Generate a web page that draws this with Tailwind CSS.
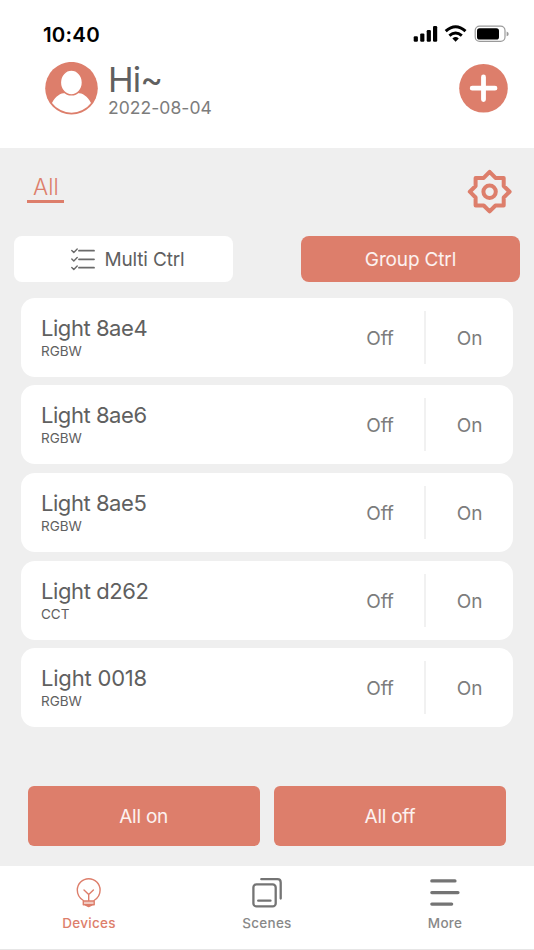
<!DOCTYPE html>
<html lang="en">
<head>
<meta charset="utf-8">
<title>Devices</title>
<script src="https://cdn.jsdelivr.net/npm/@tailwindcss/browser@4"></script>
</head>
<body class="w-[534px] h-[950px] overflow-hidden bg-white font-['Inter','Liberation_Sans',sans-serif] font-normal text-[#606060] flex flex-col">
  <header class="h-[148px] shrink-0 bg-white">
    <div class="flex justify-between items-center h-6 mt-[22px] pl-[43px] pr-[25px] text-black">
      <span class="text-[20.500px] leading-6 font-semibold tracking-[0.2px] pt-px">10:40</span>
      <svg class="w-[96px] h-6" viewBox="413 22 96 24">
        <g>
          <rect x="413.7" y="36.2" width="4.2" height="5.6" rx="1.2"/>
          <rect x="420.2" y="33.4" width="4.2" height="8.4" rx="1.2"/>
          <rect x="426.7" y="30" width="4.2" height="11.8" rx="1.2"/>
          <rect x="433" y="26" width="4.2" height="15.8" rx="1.2"/>
        </g>
        <g fill="none" stroke="#000" stroke-width="3">
          <path d="M445.700 31.200Q455.600 22.400 465.500 31.200"/>
          <path d="M449.400 35.600Q455.600 30.400 461.800 35.600"/>
        </g>
        <path d="M452.400 38.400Q455.600 35.800 458.800 38.400L455.600 41.800Z"/>
        <rect x="475.200" y="26.200" width="29.800" height="15.200" rx="4.400" fill="none" stroke="#9a9a9a" stroke-width="1.200"/>
        <rect x="477" y="28.200" width="22" height="11.400" rx="2.600"/>
        <path d="M506.600 31.600Q508.700 32.200 508.700 33.900T506.600 36.200Z" fill="#9a9a9a"/>
      </svg>
    </div>
    <div class="flex items-center pl-[45px] pr-[26px] mt-4 h-[53px]">
      <svg class="w-[53px] h-[53px]" viewBox="0 0 53 53">
        <circle cx="26.500" cy="26.200" r="26.300" fill="#dd7e6b"/>
        <path d="M7 41C10.500 34 15.500 31 20.500 31Q26.500 34.800 32.500 31C37.500 31 42.500 34 46 41A24.500 24.500 0 0 1 7 41Z" fill="#fff"/>
        <ellipse cx="26.400" cy="20.500" rx="11" ry="12.400" fill="#fff" stroke="#dd7e6b" stroke-width="1.400"/>
      </svg>
      <div class="ml-[10px] flex-1 pt-[3px]">
        <div class="text-[34.500px] leading-[34px] tracking-[-0.900px] pb-px">Hi~</div>
        <div class="text-[17.500px] leading-[20px] tracking-[0.050px] text-[#7c7c7c]">2022-08-04</div>
      </div>
      <svg class="w-[49px] h-[49px]" viewBox="0 0 49 49">
        <circle cx="24.500" cy="24.300" r="24.300" fill="#dd7e6b"/>
        <path d="M24.500 13V35.500M13.200 24.200H36" stroke="#fff" stroke-width="4.800" stroke-linecap="round"/>
      </svg>
    </div>
  </header>

  <main class="h-[718px] shrink-0 bg-[#efefef]">
    <div class="flex justify-between pl-[27.400px] pr-[22px] pt-[21px] h-[88px]">
      <div class="h-[34px] w-[37px] border-b-[3px] border-[#dd7e6b] text-center text-[22.500px] leading-9 font-light text-[#dd7e6b]">All</div>
      <svg class="w-[45px] h-[45px]" viewBox="467 169 45 45" fill="none" stroke="#dd7e6b" stroke-width="4" stroke-linejoin="round">
        <path d="M489.600 171.800L495.500 177.900H503.700V186L509.600 191.700L503.700 197.500V205.500H495.500L489.600 211.400L483.700 205.500H475.600V197.500L469.800 191.700L475.600 186V177.900H483.700Z"/>
        <circle cx="489.600" cy="191.700" r="6.200"/>
      </svg>
    </div>
    <div class="flex justify-between px-[14px] text-[19px] tracking-[-0.150px]">
      <div class="flex items-center justify-center w-[219px] h-[46px] rounded-lg bg-white pl-[9px]">
        <svg class="w-6 h-6 mr-[9px]" viewBox="0 0 24 24" fill="none" stroke="#6a6a6a" stroke-linecap="round" stroke-linejoin="round">
          <path stroke-width="1.800" d="M8 3.700H23M8 12.300H23M8 20.700H23"/>
          <path stroke-width="1.400" d="M.8 3.500L2.800 5.500L6.200 2M.8 12.100L2.800 14.100L6.200 10.600M.8 20.500L2.800 22.500L6.200 19"/>
        </svg>
        <span class="whitespace-nowrap pt-0.5">Multi Ctrl</span>
      </div>
      <div class="flex items-center justify-center w-[219px] h-[46px] rounded-lg bg-[#dd7e6b] text-white/90 pt-0.5">Group Ctrl</div>
    </div>

    <div class="flex flex-col gap-[8.500px] mt-[15.500px] px-[21px]">
      <div class="flex items-center h-[79.200px] rounded-[14px] bg-white pl-5">
        <div class="flex-1 pb-px"><div class="text-[22px] leading-7 tracking-[-0.450px]">Light 8ae4</div><div class="text-[13.500px] leading-[18px]">RGBW</div></div>
        <div class="w-[88px] h-[53px] leading-[55px] text-center text-[19px] tracking-[-0.150px] text-[#7c7c7c]">Off</div>
        <div class="w-[89px] h-[53px] leading-[55px] border-l-2 border-[#f1f1f1] text-center text-[19px] tracking-[-0.150px] text-[#7c7c7c]">On</div>
      </div>
      <div class="flex items-center h-[79.200px] rounded-[14px] bg-white pl-5">
        <div class="flex-1 pb-px"><div class="text-[22px] leading-7 tracking-[-0.450px]">Light 8ae6</div><div class="text-[13.500px] leading-[18px]">RGBW</div></div>
        <div class="w-[88px] h-[53px] leading-[55px] text-center text-[19px] tracking-[-0.150px] text-[#7c7c7c]">Off</div>
        <div class="w-[89px] h-[53px] leading-[55px] border-l-2 border-[#f1f1f1] text-center text-[19px] tracking-[-0.150px] text-[#7c7c7c]">On</div>
      </div>
      <div class="flex items-center h-[79.200px] rounded-[14px] bg-white pl-5">
        <div class="flex-1 pb-px"><div class="text-[22px] leading-7 tracking-[-0.450px]">Light 8ae5</div><div class="text-[13.500px] leading-[18px]">RGBW</div></div>
        <div class="w-[88px] h-[53px] leading-[55px] text-center text-[19px] tracking-[-0.150px] text-[#7c7c7c]">Off</div>
        <div class="w-[89px] h-[53px] leading-[55px] border-l-2 border-[#f1f1f1] text-center text-[19px] tracking-[-0.150px] text-[#7c7c7c]">On</div>
      </div>
      <div class="flex items-center h-[79.200px] rounded-[14px] bg-white pl-5">
        <div class="flex-1 pb-px"><div class="text-[22px] leading-7 tracking-[-0.400px]">Light d262</div><div class="text-[13.500px] leading-[18px]">CCT</div></div>
        <div class="w-[88px] h-[53px] leading-[55px] text-center text-[19px] tracking-[-0.150px] text-[#7c7c7c]">Off</div>
        <div class="w-[89px] h-[53px] leading-[55px] border-l-2 border-[#f1f1f1] text-center text-[19px] tracking-[-0.150px] text-[#7c7c7c]">On</div>
      </div>
      <div class="flex items-center h-[79.200px] rounded-[14px] bg-white pl-5">
        <div class="flex-1 pb-px"><div class="text-[22px] leading-7 tracking-[-0.200px]">Light 0018</div><div class="text-[13.500px] leading-[18px]">RGBW</div></div>
        <div class="w-[88px] h-[53px] leading-[55px] text-center text-[19px] tracking-[-0.150px] text-[#7c7c7c]">Off</div>
        <div class="w-[89px] h-[53px] leading-[55px] border-l-2 border-[#f1f1f1] text-center text-[19px] tracking-[-0.150px] text-[#7c7c7c]">On</div>
      </div>
    </div>

    <div class="flex gap-[14px] mt-[58.300px] pl-[27.500px] pr-[28px] text-[19px] tracking-[-0.250px] text-white/90">
      <div class="flex items-center justify-center flex-1 h-[60px] rounded-md bg-[#dd7e6b] pt-[3px]">All on</div>
      <div class="flex items-center justify-center flex-1 h-[60px] rounded-md bg-[#dd7e6b] pt-[3px]">All off</div>
    </div>
  </main>

  <nav class="grid grid-cols-3 h-[84px] shrink-0 border-b border-[#e6e6e6] bg-white pt-[9px] text-[13.500px] leading-5 font-medium tracking-[0.250px] text-[#888]">
    <div class="flex flex-col items-center text-[#dd7e6b]">
      <svg class="w-9 h-9 mb-[2px]" viewBox="71 875 36 36" fill="none" stroke="#dd7e6b" stroke-width="1.400" stroke-linecap="round" stroke-linejoin="round">
        <path d="M83.400 900.500C79.500 898.300 77.300 894.500 77.300 890.100A11.400 11.400 0 0 1 100.100 890.100C100.100 894.500 97.900 898.300 94 900.500"/>
        <path d="M84 890L88.700 894.500L93.400 890M88.700 894.500V901"/>
        <path d="M83.300 901H94.200V904.700H83.300Z" fill="#f1c9c0"/>
        <path d="M85.700 905.200H91.700L88.700 906.600Z" fill="#dd7e6b"/>
      </svg>
      <span>Devices</span>
    </div>
    <div class="flex flex-col items-center">
      <svg class="w-9 h-9 mb-[2px]" viewBox="249 875 36 36" fill="none" stroke="#747474" stroke-width="2.300" stroke-linecap="round">
        <rect x="253.400" y="884.400" width="22.300" height="22" rx="3"/>
        <path d="M258.200 900.700H270.500M261.300 879.200H277.500Q280.700 879.200 280.700 882.400V898.500"/>
      </svg>
      <span>Scenes</span>
    </div>
    <div class="flex flex-col items-center">
      <svg class="w-9 h-9 mb-[2px]" viewBox="427 875 36 36" fill="none" stroke="#747474" stroke-width="3.200" stroke-linecap="round">
        <path d="M431.800 880.900H455M431.800 892.600H458M431.800 904.100H451.700"/>
      </svg>
      <span>More</span>
    </div>
  </nav>
</body>
</html>
